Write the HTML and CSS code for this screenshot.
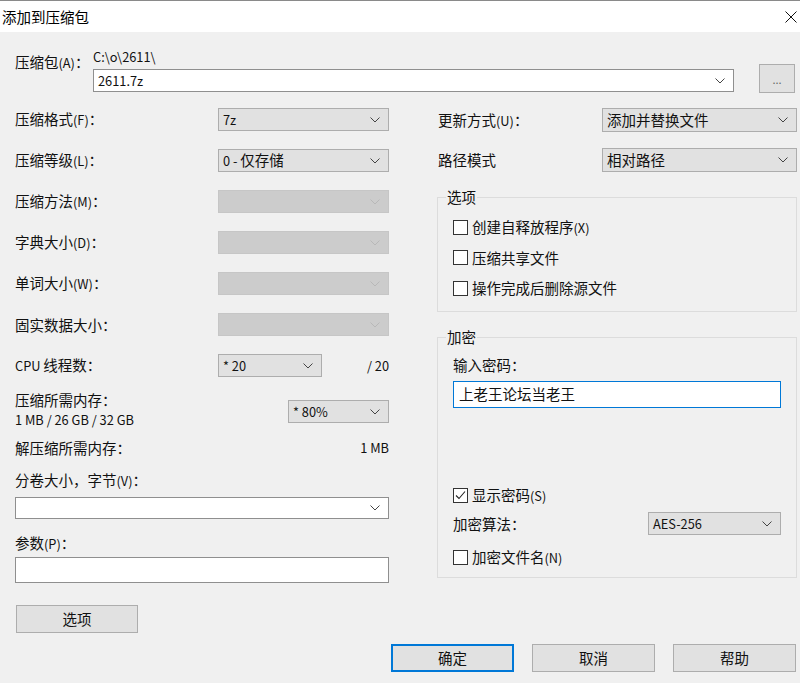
FILE: index.html
```html
<!DOCTYPE html>
<html lang="zh-CN">
<head>
<meta charset="utf-8">
<title>添加到压缩包</title>
<link rel="stylesheet" href="styles.css">
</head>
<body>
<div class="window">
  <div class="titlebar">
    <span class="title">添加到压缩包</span>
    <svg class="close" width="12" height="12" viewBox="0 0 12 12"><path d="M0.5 0.5 L11.5 11.5 M11.5 0.5 L0.5 11.5" stroke="#111" stroke-width="1" fill="none"/></svg>
  </div>
  <div class="body">
    <div class="archive-row">
      <span class="archive-lbl">压缩包<span class="l">(A)</span>：</span>
      <div class="archive-mid">
        <div class="path"><span class="l">C:\o\2611\</span></div>
        <div class="combo edit archive-combo"><span class="val l">2611.7z</span><svg class="chev" width="10" height="6" viewBox="0 0 10 6"><path d="M0.5 0.5 L5 5 L9.5 0.5" stroke="#444" fill="none"/></svg></div>
      </div>
      <div class="btn browse">...</div>
    </div>

    <div class="columns">
      <div class="left">
        <div class="row"><span class="lbl">压缩格式<span class="l">(F)</span>：</span><div class="combo sel w171"><span class="val l">7z</span><svg class="chev" width="10" height="6" viewBox="0 0 10 6"><path d="M0.5 0.5 L5 5 L9.5 0.5" stroke="#444" fill="none"/></svg></div></div>
        <div class="row"><span class="lbl">压缩等级<span class="l">(L)</span>：</span><div class="combo sel w171"><span class="val"><span class="l">0 - </span>仅存储</span><svg class="chev" width="10" height="6" viewBox="0 0 10 6"><path d="M0.5 0.5 L5 5 L9.5 0.5" stroke="#444" fill="none"/></svg></div></div>
        <div class="row"><span class="lbl">压缩方法<span class="l">(M)</span>：</span><div class="combo dis w171"><span class="val"></span><svg class="chev" width="10" height="6" viewBox="0 0 10 6"><path d="M0.5 0.5 L5 5 L9.5 0.5" stroke="#b8b8b8" fill="none"/></svg></div></div>
        <div class="row"><span class="lbl">字典大小<span class="l">(D)</span>：</span><div class="combo dis w171"><span class="val"></span><svg class="chev" width="10" height="6" viewBox="0 0 10 6"><path d="M0.5 0.5 L5 5 L9.5 0.5" stroke="#b8b8b8" fill="none"/></svg></div></div>
        <div class="row"><span class="lbl">单词大小<span class="l">(W)</span>：</span><div class="combo dis w171"><span class="val"></span><svg class="chev" width="10" height="6" viewBox="0 0 10 6"><path d="M0.5 0.5 L5 5 L9.5 0.5" stroke="#b8b8b8" fill="none"/></svg></div></div>
        <div class="row"><span class="lbl">固实数据大小：</span><div class="combo dis w171"><span class="val"></span><svg class="chev" width="10" height="6" viewBox="0 0 10 6"><path d="M0.5 0.5 L5 5 L9.5 0.5" stroke="#b8b8b8" fill="none"/></svg></div></div>
        <div class="row"><span class="lbl"><span class="l">CPU </span>线程数：</span><div class="combo sel cpu"><span class="val l">* 20</span><svg class="chev" width="10" height="6" viewBox="0 0 10 6"><path d="M0.5 0.5 L5 5 L9.5 0.5" stroke="#444" fill="none"/></svg></div><span class="rval l">/ 20</span></div>
        <div class="mem-row">
          <div class="mem-text"><div>压缩所需内存：</div><div class="l">1 MB / 26 GB / 32 GB</div></div>
          <div class="combo sel mem"><span class="val l">* 80%</span><svg class="chev" width="10" height="6" viewBox="0 0 10 6"><path d="M0.5 0.5 L5 5 L9.5 0.5" stroke="#444" fill="none"/></svg></div>
        </div>
        <div class="line split"><span>解压缩所需内存：</span><span class="l">1 MB</span></div>
        <div class="line vol-lbl">分卷大小，字节<span class="l">(V)</span>：</div>
        <div class="combo edit vol"><span class="val"></span><svg class="chev" width="10" height="6" viewBox="0 0 10 6"><path d="M0.5 0.5 L5 5 L9.5 0.5" stroke="#444" fill="none"/></svg></div>
        <div class="line param-lbl">参数<span class="l">(P)</span>：</div>
        <div class="input param"></div>
        <div class="btn opt">选项</div>
      </div>

      <div class="right">
        <div class="rrow"><span class="rlbl">更新方式<span class="l">(U)</span>：</span><div class="combo sel w195"><span class="val">添加并替换文件</span><svg class="chev" width="10" height="6" viewBox="0 0 10 6"><path d="M0.5 0.5 L5 5 L9.5 0.5" stroke="#444" fill="none"/></svg></div></div>
        <div class="rrow"><span class="rlbl">路径模式</span><div class="combo sel w195"><span class="val">相对路径</span><svg class="chev" width="10" height="6" viewBox="0 0 10 6"><path d="M0.5 0.5 L5 5 L9.5 0.5" stroke="#444" fill="none"/></svg></div></div>

        <fieldset class="group opts">
          <legend>选项</legend>
          <div class="chk"><span class="box"></span><span>创建自释放程序<span class="l">(X)</span></span></div>
          <div class="chk"><span class="box"></span><span>压缩共享文件</span></div>
          <div class="chk"><span class="box"></span><span>操作完成后删除源文件</span></div>
        </fieldset>

        <fieldset class="group enc">
          <legend>加密</legend>
          <div class="line pw-lbl">输入密码：</div>
          <div class="input pw">上老王论坛当老王</div>
          <div class="chk show"><span class="box"><svg width="13" height="13" viewBox="0 0 13 13"><path d="M2 6.5 L5 9.5 L11 2.5" stroke="#222" stroke-width="1.1" fill="none"/></svg></span><span>显示密码<span class="l">(S)</span></span></div>
          <div class="algo"><span>加密算法：</span><div class="combo sel w133"><span class="val l">AES-256</span><svg class="chev" width="10" height="6" viewBox="0 0 10 6"><path d="M0.5 0.5 L5 5 L9.5 0.5" stroke="#444" fill="none"/></svg></div></div>
          <div class="chk encname"><span class="box"></span><span>加密文件名<span class="l">(N)</span></span></div>
        </fieldset>
      </div>
    </div>

    <div class="actions">
      <div class="btn act default">确定</div>
      <div class="btn act">取消</div>
      <div class="btn act">帮助</div>
    </div>
  </div>
</div>
</body>
</html>
```

FILE: styles.css
```css
* { box-sizing: border-box; }
html, body { margin: 0; padding: 0; }
body {
  width: 800px;
  height: 683px;
  overflow: hidden;
  background: #f0f0f0;
  font-family: "Noto Sans CJK SC", "Microsoft YaHei", sans-serif;
  font-size: 14.5px;
  line-height: 20px;
  color: #111;
}
.l { font-size: 12.8px; }
.window { width: 800px; height: 683px; }

.titlebar {
  height: 32px;
  background: #fff;
  border-top: 1px solid #8a8a8a;
  display: flex;
  align-items: center;
  justify-content: space-between;
  padding: 0 3px 0 2px;
}
.title { font-size: 14.5px; color: #000; }

.body { padding: 0 3px 0 15px; }

.archive-row { display: flex; align-items: flex-start; padding-top: 16px; height: 75px; }
.archive-lbl { width: 78px; flex: none; margin-top: 4px; }
.archive-mid { width: 641px; flex: none; }
.path { line-height: 16px; }
.archive-combo { margin-top: 4px; height: 23px; }
.browse { width: 36px; height: 29px; margin-left: 25px; margin-top: 16px; font-size: 11px; color: #666; line-height: 24px; }

.combo {
  display: flex;
  align-items: center;
  justify-content: space-between;
  padding: 0 8px 0 4px;
  border: 1px solid #adadad;
  background: #e1e1e1;
  flex: none;
}
.combo .val { white-space: nowrap; }
.combo.edit { background: #fff; border-color: #8f8f8f; }
.combo.dis { background: #cccccc; border-color: #c6c6c6; }
.chev { flex: none; }

.columns { display: flex; align-items: flex-start; margin-top: 1px; }
.left { width: 374px; flex: none; display: flex; flex-direction: column; }
.right { width: 360px; flex: none; margin-left: 48px; display: flex; flex-direction: column; }

.row { display: flex; align-items: center; height: 23px; }
.row + .row { margin-top: 18px; }
.row .combo { height: 23px; }
.lbl { width: 203px; flex: none; }
.w171 { width: 171px; }
.cpu { width: 104px; }
.rval { flex: 1; text-align: right; }

.mem-row { display: flex; justify-content: space-between; align-items: flex-start; margin-top: 13px; height: 40px; }
.mem-text div { height: 20px; }
.mem { width: 101px; height: 23px; margin-top: 10px; }
.line { height: 20px; }
.split { display: flex; justify-content: space-between; margin-top: 8px; }
.vol-lbl { margin-top: 12px; }
.vol { height: 22px; margin-top: 7px; width: 374px; }
.param-lbl { margin-top: 14px; }
.input { background: #fff; border: 1px solid #8f8f8f; }
.param { height: 26px; margin-top: 4px; width: 374px; }

.btn {
  display: flex;
  align-items: center;
  justify-content: center;
  background: #e1e1e1;
  border: 1px solid #adadad;
  flex: none;
}
.opt { width: 122px; height: 28px; margin-top: 22px; margin-left: 1px; }

.rrow { display: flex; align-items: center; height: 24px; }
.rrow + .rrow { margin-top: 16px; }
.rrow .combo { height: 24px; }
.rlbl { width: 164px; flex: none; margin-left: 1px; }
.w195 { width: 195px; }

.group {
  margin: 0;
  padding: 0 15px 13px 15px;
  border: 1px solid #dcdcdc;
  min-width: 0;
}
.group legend { padding: 0 1px; margin-left: -7px; line-height: 20px; height: 20px; }
.opts { margin-top: 15px; }
.enc { margin-top: 15px; padding-bottom: 10px; }

.chk { display: flex; align-items: center; height: 20px; }
.opts .chk:first-of-type { margin-top: 10px; }
.opts .chk + .chk { margin-top: 10.5px; }
.box {
  width: 15px; height: 15px;
  border: 1px solid #333;
  background: #fff;
  margin-right: 4px;
  flex: none;
  display: flex; align-items: center; justify-content: center;
}

.pw-lbl { margin-top: 8px; }
.pw { height: 27px; margin-top: 6px; border-color: #0078d7; padding-left: 5px; line-height: 24px; }
.show { margin-top: 77px; }
.algo { display: flex; justify-content: space-between; align-items: center; height: 23px; margin-top: 7px; }
.algo .combo { height: 23px; }
.w133 { width: 133px; }
.encname { margin-top: 12px; }

.actions { display: flex; justify-content: flex-end; gap: 18px; margin-top: 11px; padding-right: 1px; }
.act { width: 123px; height: 28px; }
.default { border: 2px solid #0078d7; }
```
